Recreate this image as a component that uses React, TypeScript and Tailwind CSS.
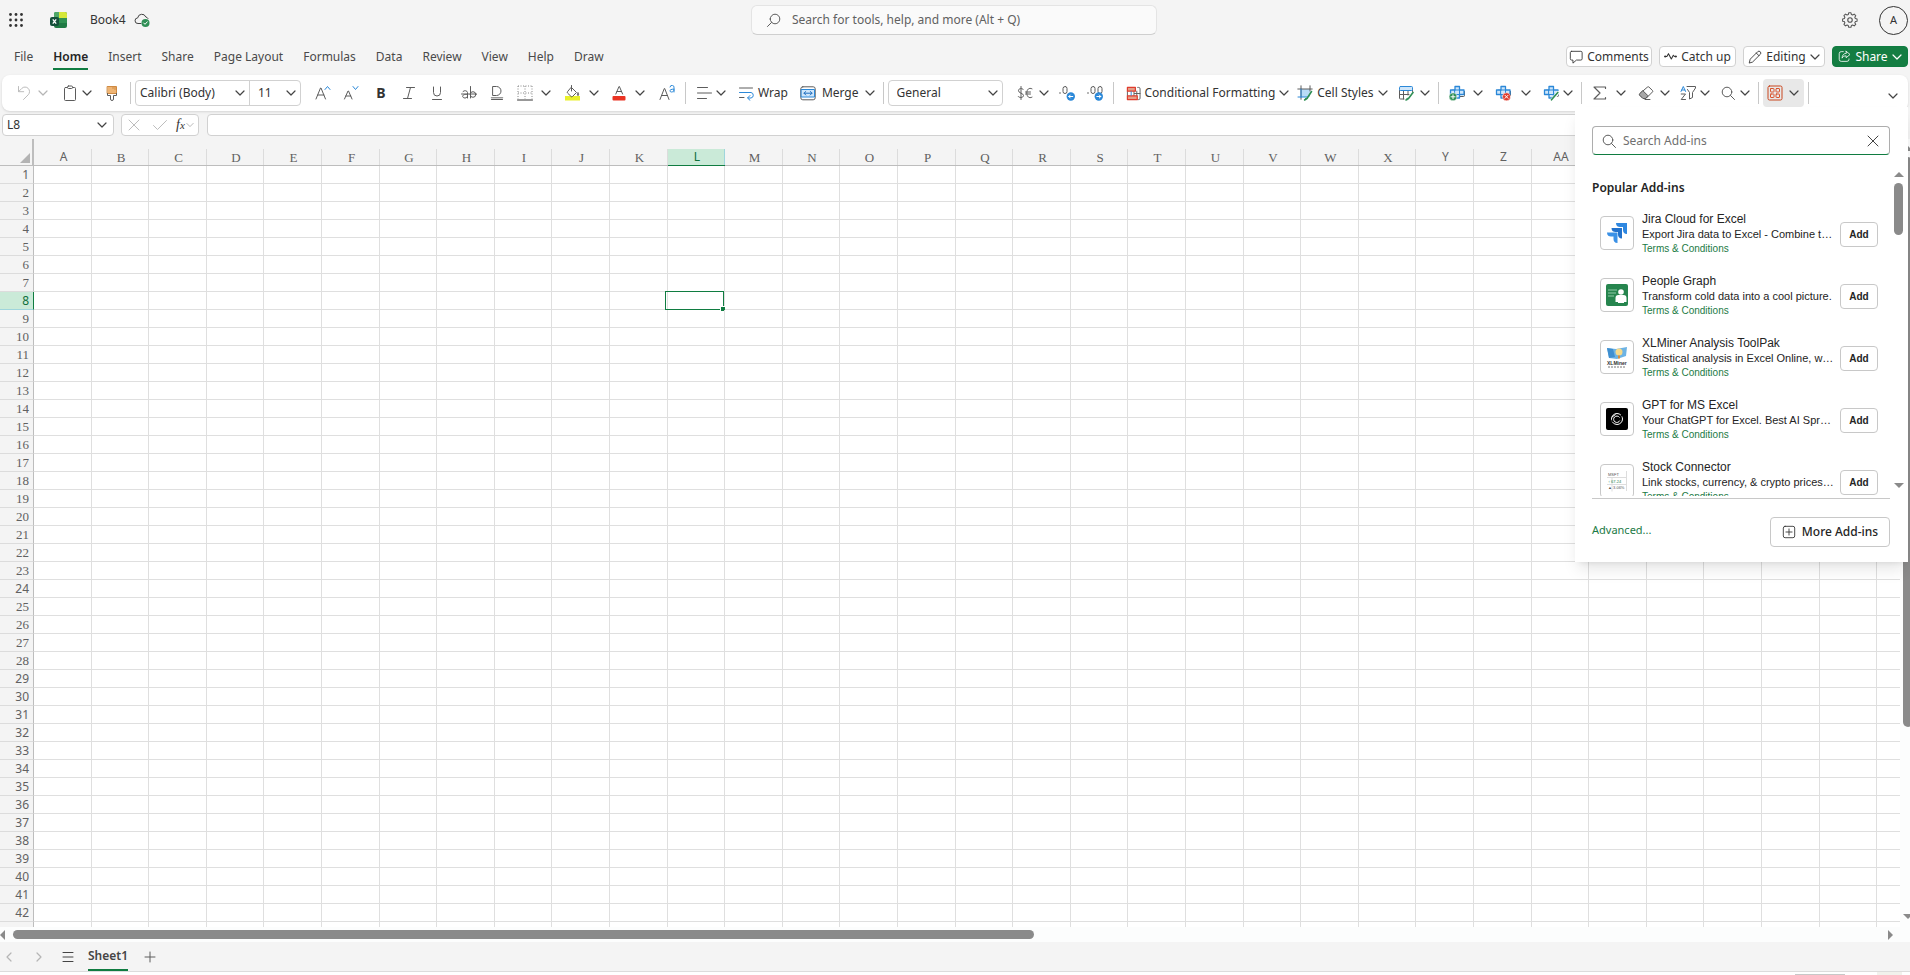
import type { ReactNode } from "react";
import clsx from "clsx";

const tabs = ["File", "Home", "Insert", "Share", "Page Layout", "Formulas", "Data", "Review", "View", "Help", "Draw"];

// the last column and row only show as a sliver, so they carry no label
const columns = [..."ABCDEFGHIJKLMNOPQRSTUVWXYZ", "AA", "AB", "AC", "AD", "AE", "AF", ""];
const rows = [...Array.from({ length: 42 }, (_, i) => i + 1), null];
const columnWidths = ["w-[58px]", "w-[57px]", "w-[58px]", "w-[57px]", "w-[58px]"];
const sansColumns = ["A", "L", "Y", "Z"];
const sansRows = [1, 8, 24];

const ACTIVE_COLUMN = "L";
const ACTIVE_ROW = 8;

const sans = "font-['Noto_Sans',sans-serif]";
const serif = "font-['Liberation_Serif',serif]";

/* ---------- icons ---------- */

function Icon({ children, size = 16, className }: { children: ReactNode; size?: number; className?: string }) {
    return (
        <svg
            width={size}
            height={size}
            viewBox="0 0 16 16"
            fill="none"
            stroke="#5c5c5c"
            strokeLinecap="round"
            strokeLinejoin="round"
            className={clsx("shrink-0", className)}
            aria-hidden="true"
        >
            {children}
        </svg>
    );
}

function Chevron({ className = "text-[#444]" }: { className?: string }) {
    return (
        <svg width="10" height="10" viewBox="0 0 10 10" fill="none" className={clsx("shrink-0", className)} aria-hidden="true">
            <path d="M1 3l4 4 4-4" stroke="currentColor" strokeWidth="1.2" strokeLinecap="round" strokeLinejoin="round" />
        </svg>
    );
}

function WaffleIcon() {
    return (
        <Icon>
            {[2.5, 8, 13.5].map((y) =>
                [2.5, 8, 13.5].map((x) => <circle key={`${x}-${y}`} cx={x} cy={y} r="1.4" fill="#333" stroke="none" />)
            )}
        </Icon>
    );
}

function ExcelIcon() {
    return (
        <svg width="18" height="18" viewBox="0 0 18 18" aria-hidden="true">
            <rect x="4" y="1" width="13" height="16" rx="2" fill="#1f7a44" />
            <path d="M6 1h4v6H4V3a2 2 0 012-2z" fill="#4fa868" />
            <path d="M9 1h6a2 2 0 012 2v4H9z" fill="#d5e83a" />
            <path d="M9 7h8v5H9z" fill="#2f9152" />
            <path d="M4 7h5v5H4z" fill="#1d8a49" />
            <rect x="0" y="6" width="9" height="9" rx="2" fill="#14503a" />
            <path d="M2.8 8.3l3.4 4.4M6.2 8.3l-3.4 4.4" stroke="#fff" strokeWidth="1.3" />
        </svg>
    );
}

function CloudSavedIcon() {
    return (
        <Icon>
            <path d="M7 11.5H4a2.8 2.8 0 01-.3-5.6A4.2 4.2 0 0111.8 5a3 3 0 012.2 1.5" stroke="#444" />
            <circle cx="11.5" cy="11" r="4" fill="#2f8f55" stroke="none" />
            <path d="M9.7 11l1.3 1.3 2.3-2.5" stroke="#fff" />
        </Icon>
    );
}

function SearchIcon({ flipped = false }: { flipped?: boolean }) {
    return (
        <Icon className={flipped ? "-scale-x-100" : ""}>
            <circle cx="7" cy="7" r="4.8" />
            <path d="M10.5 10.5L14.500 14.500" />
        </Icon>
    );
}

function GearIcon() {
    return (
        <Icon size={18}>
            <circle cx="8" cy="8" r="2" stroke="#555" />
            <path
                d="M6.900 1.500h2.200l.4 1.700 1.200.5 1.500-.9 1.500 1.500-.9 1.500.5 1.200 1.700.4v2.200l-1.700.4-.5 1.200.9 1.500-1.500 1.500-1.500-.9-1.200.5-.4 1.700H6.900l-.4-1.700-1.200-.5-1.500.9-1.500-1.500.9-1.500-.5-1.200L1 9.600V7.400L2.700 7l.5-1.200-.9-1.500 1.500-1.500 1.500.9 1.200-.5z"
                transform="translate(.5 .2) scale(.92)"
                stroke="#555"
            />
        </Icon>
    );
}

function UndoIcon() {
    return (
        <Icon>
            <path d="M2.5 1.500v5.200h5.200M2.500 6.700l3.300-3.300a4.500 4.500 0 016.400 6.400L7.500 14.500" stroke="#bdbdbd" />
        </Icon>
    );
}

function ClipboardIcon() {
    return (
        <Icon>
            <rect x="2.5" y="2.5" width="11" height="13" rx="1" />
            <rect x="5.5" y="1" width="5" height="2.5" rx="1" fill="#fff" />
        </Icon>
    );
}

function BrushIcon() {
    return (
        <Icon>
            <path d="M3.5 1.500h9v7h-9z" fill="#efb574" stroke="#cf8a42" />
            <path d="M9 1.500v2M11 1.500v3" stroke="#cf8a42" />
            <path d="M3.500 8.500v2h3v3.500a1.500 1.500 0 003 0v-3.500h3v-2" />
        </Icon>
    );
}

function GlyphIcon({ kind }: { kind: "grow" | "shrink" | "italic" | "underline" | "double" | "strike" | "color" | "case" }) {
    return (
        <Icon>
            {kind === "grow" && (
                <>
                    <path d="M1 14L5.500 3h.5l4.500 11M2.700 10h6.200" />
                    <path d="M10 4.500L12.500 1.500 15 4.500" stroke="#2b88d8" />
                </>
            )}
            {kind === "shrink" && (
                <>
                    <path d="M1.500 14L5 6h.5L9 14M2.800 11h5" />
                    <path d="M10 1.500L12.500 4.500 15 1.500" stroke="#2b88d8" />
                </>
            )}
            {kind === "italic" && <path d="M5.500 2.500h8M2.500 13.500h8M9.500 2.500l-3 11" />}
            {kind === "underline" && <path d="M4.500 2v5.500a3.500 3.500 0 007 0V2M3.500 14.500h9" />}
            {kind === "double" && (
                <>
                    <path d="M4 1.500h3.500a4.500 4.500 0 010 9H4zM2.500 14.500h11" />
                    <path d="M2.500 12.800h11" strokeWidth="1.5" stroke="#999" />
                </>
            )}
            {kind === "strike" && (
                <>
                    <path d="M2 6.500a2.500 2 0 014.500 1V13M6.500 9.500c-6-1-6 3.500-2.500 3.500 1.500 0 2.500-1 2.500-2" />
                    <path d="M9.500 1.500V13" />
                    <circle cx="12" cy="9.500" r="2.800" />
                    <path d="M.5 9h15" />
                </>
            )}
            {kind === "color" && (
                <>
                    <path d="M4.800 9L8 1.500h.4L11.600 9M6 6.500h4.500" />
                    <rect x="1.500" y="11" width="13" height="4.500" rx="1" fill="#ea3323" stroke="none" />
                </>
            )}
            {kind === "case" && (
                <>
                    <path d="M1 14.500L5.300 3.500h.4L10 14.500M2.500 10.500h6" />
                    <path d="M11 2a2 2 0 014 .8V7M15 4.200c-5-.5-5 2.800-2.500 2.800 1.500 0 2.500-1 2.500-1.800" stroke="#2b88d8" />
                </>
            )}
        </Icon>
    );
}

function BorderIcon() {
    return (
        <Icon>
            <path d="M1 1h14M1 8h14M1 1v13M8 1v13M15 1v13" strokeDasharray="1 1.5" stroke="#888" strokeLinecap="butt" />
            <path d="M.5 15h15" stroke="#333" />
        </Icon>
    );
}

function BucketIcon() {
    return (
        <Icon>
            <rect x="0" y="11" width="15" height="4.5" fill="#e9f02c" stroke="none" />
            <path d="M6.500 2.500l5 5-4 4a1 1 0 01-1.400 0L2.500 8a1 1 0 010-1.400zM6.500.5V6" />
            <path d="M13 8c-2.500 3.500 2.500 3.500 0 0z" />
        </Icon>
    );
}

function AlignIcon() {
    return (
        <Icon>
            <path d="M1.500 2.500h10M1.500 8h14M1.500 13.500h9" />
        </Icon>
    );
}

function WrapIcon() {
    return (
        <Icon>
            <path d="M1.500 3h13" />
            <path d="M1.500 7.500h11.500a2.800 2.800 0 010 5.500h-3M12 10.500L9.500 13l2.500 2.300" stroke="#2b88d8" />
            <path d="M1.500 12.500H6" />
        </Icon>
    );
}

function MergeIcon() {
    return (
        <Icon>
            <rect x=".8" y="1.8" width="14.4" height="13" rx="2" />
            <rect x="1.5" y="4.5" width="13" height="7.5" fill="#cfe6fa" stroke="#2b88d8" />
            <path d="M4 8.200h8M5.800 6.500L4 8.200l1.800 1.800M10.200 6.500L12 8.200l-1.800 1.800" stroke="#1f6fbf" />
        </Icon>
    );
}

function CurrencyIcon() {
    return (
        <Icon>
            <path d="M6.300 4.500C5.500 3 1.500 3 1.500 5.700S6.500 8 6.500 10.500 2 13 1.200 11.500M4 1.500v13" />
            <path d="M15 3.800c-3-1.600-5.200.7-5.200 4.200s2.200 5.800 5.200 4.200M8.500 7h5M8.500 9h5" />
        </Icon>
    );
}

function DecimalIcon({ zeros, arrow }: { zeros: number; arrow: string }) {
    return (
        <Icon>
            <circle cx="1" cy="8" r=".8" fill="#5c5c5c" stroke="none" />
            <rect x="4" y="1.5" width="4" height="7" rx="2" />
            {zeros > 1 && <rect x="11" y="1.5" width="4" height="7" rx="2" />}
            <circle cx="11.8" cy="11.5" r="4.2" fill="#2b88d8" stroke="none" />
            <path d={arrow} stroke="#fff" />
        </Icon>
    );
}

function ConditionalIcon() {
    return (
        <Icon size={15}>
            <path d="M12.500 1.500h1a1.500 1.500 0 011.500 1.500v10a1.500 1.500 0 01-1.500 1.500h-1M1.500 5.500v5M8.500 5.500v5M11.500 5.500v5M9 8h6" />
            <path d="M1.500 1.500H10v4H1.500zM1.500 10.500H12v4H1.500z" fill="#e3a08a" stroke="#e03c2d" strokeWidth="1.3" />
            <path d="M5.500 6v4" stroke="#2b88d8" />
        </Icon>
    );
}

function CellStylesIcon() {
    return (
        <Icon>
            <path d="M4 4h9v8H4z" fill="#b9dcf7" stroke="none" />
            <path d="M4 .8v13.500M.8 4h14.400M13 .8V6" />
            <path d="M1 12h9M4 4v8" stroke="#2b88d8" />
            <path d="M14.500 6.500L10 13.500" stroke="#2f8f55" strokeWidth="1.6" />
            <path d="M7.500 15c.2-1.500 1.200-2 2.500-1.500-.2 1-1 1.800-2.500 1.500z" fill="#2f8f55" stroke="#2f8f55" />
        </Icon>
    );
}

function FormatTableIcon() {
    return (
        <Icon>
            <path d="M1.500 5v8a1 1 0 001 1H6M5.500 5v9M10 5v5M1.500 9.500H11M14.500 4.500v2" />
            <rect x="1.5" y="1.5" width="13" height="4" rx="1" fill="#cfe6fa" stroke="#2b88d8" />
            <path d="M15 7.500l-4.500 6" stroke="#2f8f55" strokeWidth="1.6" />
            <path d="M8 15c.2-1.500 1.200-2 2.500-1.500-.2 1-1 1.800-2.500 1.500z" fill="#2f8f55" stroke="#2f8f55" />
        </Icon>
    );
}

function CellsIcon({ kind }: { kind: "insert" | "delete" | "format" }) {
    return (
        <Icon>
            <path d="M11 11.500h3.500a1 1 0 001-1v-4M4 6V5" />
            <path d="M6 1.500h4.500V5H15v4.500h-4.500V13H6V9.500H1.500V5H6z" fill="#cfe6fa" stroke="#2b88d8" strokeWidth="1.3" />
            <path d="M6 5h4.500v4.500H6z" stroke="#2b88d8" />
            {kind === "insert" && (
                <>
                    <circle cx="4" cy="11.8" r="3.9" fill="#2f8f55" stroke="#fff" strokeWidth=".5" />
                    <path d="M4 9.800v4M2 11.800h4" stroke="#fff" />
                </>
            )}
            {kind === "delete" && (
                <>
                    <circle cx="11.5" cy="11.8" r="4" fill="#e03c2d" stroke="#fff" strokeWidth=".5" />
                    <path d="M10 10.300l3 3M13 10.300l-3 3" stroke="#fff" />
                </>
            )}
            {kind === "format" && (
                <>
                    <path d="M9 15L15 7.500" stroke="#fff" strokeWidth="3.5" />
                    <path d="M8.500 14.800L14.800 7.500" stroke="#2f8f55" strokeWidth="1.7" />
                </>
            )}
        </Icon>
    );
}

function SigmaIcon() {
    return (
        <Icon>
            <path d="M13.500 3.500v-1.500H2L8 8l-6 6h11.500v-1.500" strokeWidth="1.2" />
        </Icon>
    );
}

function EraserIcon() {
    return (
        <Icon>
            <path d="M9.500 2a1 1 0 011.400 0L14.500 5.500a1 1 0 010 1.400L8 13.500H5L1.700 10.200a1 1 0 010-1.400z" />
            <path d="M5 5.800l5 5-2.500 2.700H5L1.700 10.200a1 1 0 010-1.400z" fill="#a8a8a8" />
            <path d="M7 14.500h5" />
        </Icon>
    );
}

function SortFilterIcon() {
    return (
        <Icon>
            <path d="M1 6.500L3.300 1.500 5.600 6.500M1.800 5h3" stroke="#2b88d8" />
            <path d="M1.200 9h4.300L1.200 14.500h4.300" />
            <path d="M7 1.500h8.500v1.500l-3 4.500v5l-3 1.500V7.500L7.500 4.500" />
        </Icon>
    );
}

function AddinsIcon() {
    return (
        <Icon>
            <rect x="1" y="1" width="14" height="14" rx="1.5" stroke="#c8461f" />
            {[3.5, 9].map((y) =>
                [3.5, 9].map((x) => (
                    <rect key={`${x}-${y}`} x={x} y={y} width="3.5" height="3.5" rx=".5" stroke="#d9532c" />
                ))
            )}
        </Icon>
    );
}

/* ---------- title bar and tabs ---------- */

function TitleBar() {
    return (
        <header className="grid h-10 grid-cols-[1fr_406px_1fr] items-center pr-0.5">
            <div className="flex items-center pl-2">
                <button type="button" aria-label="App launcher">
                    <WaffleIcon />
                </button>
                <span className="ml-6.5 mr-5.5">
                    <ExcelIcon />
                </span>
                <button type="button" className="text-xs text-[#333]">
                    Book4
                </button>
                <span className="ml-2">
                    <CloudSavedIcon />
                </span>
            </div>
            <label className="flex h-[30px] items-center gap-2.5 rounded-md border border-[#e4e4e4] border-b-[#cfcfcf] bg-[#fafafa] pl-3.5">
                <SearchIcon flipped />
                <input
                    type="text"
                    aria-label="Search"
                    placeholder="Search for tools, help, and more (Alt + Q)"
                    className="w-full bg-transparent text-xs outline-none placeholder:text-[#616161]"
                />
            </label>
            <div className="flex items-center justify-end gap-5">
                <button type="button" aria-label="Settings">
                    <GearIcon />
                </button>
                <button type="button" className="size-[29px] rounded-full border border-[#333] text-[11px] text-[#333]">
                    A
                </button>
            </div>
        </header>
    );
}

function HeaderButton({ children, primary = false, className }: { children: ReactNode; primary?: boolean; className: string }) {
    return (
        <button
            type="button"
            className={clsx(
                "flex h-[21px] items-center justify-center gap-1 rounded border text-xs",
                primary ? "border-[#107c41] bg-[#147d42] text-white" : "border-[#d1d1d1] bg-white text-[#333]",
                className
            )}
        >
            {children}
        </button>
    );
}

function TabBar() {
    return (
        <div className="flex h-[35px] items-center justify-between pb-0.5 pl-3.5 pr-0.5">
            <nav className="flex gap-5 text-xs text-[#4a4a4a]">
                {tabs.map((tab) => (
                    <button
                        key={tab}
                        type="button"
                        className={clsx(
                            "mt-0.5 h-6 border-b-2 leading-5",
                            tab === "Home" ? "border-[#107c41] font-semibold text-[#242424]" : "border-transparent"
                        )}
                    >
                        {tab}
                    </button>
                ))}
            </nav>
            <div className="flex gap-[7px]">
                <HeaderButton className="w-[86px]">
                    <Icon size={14}>
                        <path d="M3 1.500h10.500a1.500 1.500 0 011.500 1.500v7a1.500 1.500 0 01-1.500 1.500H8.500L4.500 15v-3.500H3A1.500 1.500 0 011.500 10V3A1.500 1.500 0 013 1.500z" stroke="#333" />
                    </Icon>
                    Comments
                </HeaderButton>
                <HeaderButton className="w-[77px]">
                    <Icon size={13}>
                        <path d="M1 8h2.500l2-3.500L9 11l2.500-4.500L13 8h2" stroke="#333" strokeWidth="1.3" />
                        <circle cx="1.5" cy="8" r="1.3" fill="#333" stroke="none" />
                        <circle cx="14.5" cy="8" r="1.3" fill="#333" stroke="none" />
                    </Icon>
                    Catch up
                </HeaderButton>
                <HeaderButton className="w-[82px]">
                    <Icon size={14}>
                        <path d="M1.500 14.500l1-4L11 2a2.100 2.100 0 013 3l-8.500 8.500zM9.500 3.500l3 3" stroke="#333" />
                    </Icon>
                    Editing
                    <Chevron />
                </HeaderButton>
                <HeaderButton primary className="w-[76px]">
                    <Icon size={13}>
                        <path
                            d="M6.500 2H4a2.500 2.500 0 00-2.500 2.500v7A2.500 2.500 0 004 14h7a2.500 2.500 0 002.500-2.500V11M10 1.500L14.800 5.500 10 9.500V7.200C7.500 7.200 6 8 5 10c.2-3.500 2-5.800 5-6z"
                            stroke="#fff"
                        />
                    </Icon>
                    Share
                    <Chevron className="text-white" />
                </HeaderButton>
            </div>
        </div>
    );
}

/* ---------- ribbon ---------- */

interface ToolProps {
    name: string;
    icon: ReactNode;
    label?: string;
    menu?: boolean;
    dim?: boolean;
    className: string;
}

function Tool({ name, icon, label, menu, dim, className }: ToolProps) {
    return (
        <button type="button" aria-label={name} className={clsx("flex shrink-0 items-center whitespace-nowrap", className)}>
            {icon}
            {label && <span>{label}</span>}
            {menu && <Chevron className={dim ? "text-[#b5b5b5]" : "text-[#444]"} />}
        </button>
    );
}

function Divider({ className }: { className: string }) {
    return <div className={clsx("h-[22px] w-px shrink-0 bg-[#c8c8c8]", className)} />;
}

function Combo({ name, value, className }: { name: string; value: string; className: string }) {
    return (
        <div className={clsx("relative h-full", className)}>
            <select aria-label={name} className="size-full appearance-none bg-transparent outline-none">
                <option>{value}</option>
            </select>
            <span className="pointer-events-none absolute inset-y-0 right-1 flex items-center">
                <Chevron />
            </span>
        </div>
    );
}

function Ribbon() {
    return (
        <div className="mx-0.5 flex h-9 items-center rounded-lg bg-white text-xs text-[#333] shadow">
            <Tool name="Undo" icon={<UndoIcon />} menu dim className="ml-3.5 gap-1.5" />
            <Tool name="Paste" icon={<ClipboardIcon />} menu className="ml-3.5 gap-1" />
            <Tool name="Format painter" icon={<BrushIcon />} className="ml-3" />
            <Divider className="ml-2.5" />
            <div className="ml-1 flex h-[26px] w-[166px] shrink-0 rounded border border-[#d1d1d1]">
                <Combo name="Font" value="Calibri (Body)" className="w-[114px] border-r border-[#d1d1d1] pl-1" />
                <Combo name="Font size" value="11" className="flex-1 pl-2" />
            </div>
            <Tool name="Grow font" icon={<GlyphIcon kind="grow" />} className="ml-3.5" />
            <Tool name="Shrink font" icon={<GlyphIcon kind="shrink" />} className="ml-3" />
            <button type="button" className="ml-3.5 w-4 shrink-0 text-sm font-bold">
                B
            </button>
            <Tool name="Italic" icon={<GlyphIcon kind="italic" />} className="ml-3" />
            <Tool name="Underline" icon={<GlyphIcon kind="underline" />} className="ml-3" />
            <Tool name="Strikethrough" icon={<GlyphIcon kind="strike" />} className="ml-4" />
            <Tool name="Double underline" icon={<GlyphIcon kind="double" />} className="ml-3" />
            <Tool name="Borders" icon={<BorderIcon />} menu className="ml-3 gap-2" />
            <Tool name="Fill color" icon={<BucketIcon />} menu className="ml-3.5 gap-2" />
            <Tool name="Font color" icon={<GlyphIcon kind="color" />} menu className="ml-3 gap-2" />
            <Tool name="Text effects" icon={<GlyphIcon kind="case" />} className="ml-3.5" />
            <Divider className="ml-2.5" />
            <Tool name="Align" icon={<AlignIcon />} menu className="ml-2.5 gap-1" />
            <Tool name="Wrap" icon={<WrapIcon />} label="Wrap" className="ml-3 gap-1" />
            <Tool name="Merge" icon={<MergeIcon />} label="Merge" menu className="ml-3 gap-1.5" />
            <Divider className="ml-2" />
            <div className="ml-1 h-[26px] w-[115px] shrink-0 rounded border border-[#d1d1d1]">
                <Combo name="Number format" value="General" className="pl-2" />
            </div>
            <Tool name="Currency" icon={<CurrencyIcon />} menu className="ml-3.5 gap-1.5" />
            <Tool name="Increase decimal" icon={<DecimalIcon zeros={1} arrow="M9.8 11.500h4M11.300 10L9.800 11.500l1.500 1.500" />} className="ml-2.5" />
            <Tool name="Decrease decimal" icon={<DecimalIcon zeros={2} arrow="M9.8 11.500h4M12.300 10l1.500 1.500-1.500 1.500" />} className="ml-3" />
            <Divider className="ml-2.5" />
            <Tool name="Conditional Formatting" icon={<ConditionalIcon />} label="Conditional Formatting" menu className="ml-3 gap-1" />
            <Tool name="Cell Styles" icon={<CellStylesIcon />} label="Cell Styles" menu className="ml-2 gap-1" />
            <Tool name="Format as table" icon={<FormatTableIcon />} menu className="ml-2.5 gap-1.5" />
            <Divider className="ml-2" />
            <Tool name="Insert cells" icon={<CellsIcon kind="insert" />} menu className="ml-2.5 gap-2" />
            <Tool name="Delete cells" icon={<CellsIcon kind="delete" />} menu className="ml-3 gap-2.5" />
            <Tool name="Format cells" icon={<CellsIcon kind="format" />} menu className="ml-3 gap-1" />
            <Divider className="ml-2" />
            <Tool name="AutoSum" icon={<SigmaIcon />} menu className="ml-2.5 gap-2" />
            <Tool name="Clear" icon={<EraserIcon />} menu className="ml-3 gap-1.5" />
            <Tool name="Sort and filter" icon={<SortFilterIcon />} menu className="ml-2.5 gap-1" />
            <Tool name="Find" icon={<SearchIcon />} menu className="ml-2.5 gap-1" />
            <Divider className="ml-2" />
            <Tool name="Add-ins" icon={<AddinsIcon />} menu className="ml-1 h-7 w-[41px] justify-center gap-1.5 rounded bg-[#e8e8e8]" />
            <Divider className="ml-1" />
            <button type="button" aria-label="Ribbon options" className="ml-auto mr-2.5 mt-1.5">
                <Chevron />
            </button>
        </div>
    );
}

function FormulaBar() {
    return (
        <div className="mt-[3px] flex h-[22px] px-0.5 text-xs text-[#333]">
            <div className="flex w-[112px] items-center rounded border border-[#d1d1d1] bg-white pl-1 pr-1.5">
                <input aria-label="Name box" defaultValue="L8" className="w-full min-w-0 bg-transparent outline-none" />
                <button type="button" aria-label="Named ranges">
                    <Chevron />
                </button>
            </div>
            <div className="ml-[7px] flex w-[78px] items-center rounded border border-[#d1d1d1] bg-white px-1">
                <button type="button" aria-label="Cancel">
                    <Icon>
                        <path d="M3 3l10 10M13 3L3 13" stroke="#bdbdbd" />
                    </Icon>
                </button>
                <button type="button" aria-label="Enter" className="ml-2.5">
                    <Icon>
                        <path d="M1.500 8.500L5.500 12.500 14.500 3.500" stroke="#bdbdbd" />
                    </Icon>
                </button>
                <button type="button" aria-label="Insert function" className="ml-2 flex items-center">
                    <span className="font-['Liberation_Serif',serif] text-sm italic leading-4">
                        f<span className="text-[11px]">x</span>
                    </span>
                </button>
                <Chevron className="ml-auto size-2 text-[#b5b5b5]" />
            </div>
            <input aria-label="Formula" className="ml-2 flex-1 rounded border border-[#d1d1d1] bg-white px-2 outline-none" />
        </div>
    );
}

/* ---------- grid ---------- */

function Grid() {
    return (
        <div className="min-w-0 flex-1 overflow-hidden bg-white">
            <table className="w-max border-separate border-spacing-0 text-xs text-[#616161]">
                <colgroup>
                    <col className="w-[34px]" />
                    {columns.map((column, i) => (
                        <col key={column} className={columnWidths[i % 5]} />
                    ))}
                </colgroup>
                <thead>
                    <tr className="h-[27px] bg-[#f4f4f4]">
                        <th aria-label="Select all" className="border-b border-r-2 border-[#bdbdbd] p-0 pr-0.5 align-bottom">
                            <svg width="10" height="10" viewBox="0 0 10 10" className="mb-0.5 ml-auto block" aria-hidden="true">
                                <path d="M10 0v10H0z" fill="#b3b3b3" />
                            </svg>
                        </th>
                        {columns.map((column) => {
                            const active = column === ACTIVE_COLUMN;
                            const isSans = sansColumns.includes(column) || column.length > 1;
                            return (
                                <th
                                    key={column}
                                    scope="col"
                                    className={clsx(
                                        "border-b p-0 align-bottom font-normal",
                                        active ? "border-[#107c41]" : "border-[#bdbdbd]"
                                    )}
                                >
                                    <div
                                        className={clsx(
                                            "h-4 border-r pl-0.5",
                                            active
                                                ? "border-[#9fd5dc] bg-[#caead8] text-[#0f703b]"
                                                : "border-[#dcdcdc]",
                                            isSans ? clsx(sans, "leading-[15px]") : clsx(serif, "text-[13px] leading-[18px]")
                                        )}
                                    >
                                        {column}
                                    </div>
                                </th>
                            );
                        })}
                    </tr>
                </thead>
                <tbody>
                    {rows.map((row) => {
                        const active = row === ACTIVE_ROW;
                        const isSans = row !== null && (sansRows.includes(row) || row > 28);
                        return (
                            <tr key={row ?? "last"} className="h-[18px]">
                                <th
                                    scope="row"
                                    className={clsx(
                                        "border-b border-r p-0 pr-1 text-right font-normal",
                                        active
                                            ? "border-b-[#9fd5dc] border-r-[#107c41] bg-[#caead8] text-[#0f703b]"
                                            : "border-b-[#dcdcdc] border-r-[#bdbdbd] bg-[#f4f4f4]",
                                        isSans ? clsx(sans, "leading-[17px]") : clsx(serif, "text-[13px] leading-[17px]")
                                    )}
                                >
                                    {row}
                                </th>
                                {columns.map((column) => (
                                    <td key={column} className="relative border-b border-r border-[#dfdfdf] p-0">
                                        {active && column === ACTIVE_COLUMN && (
                                            <div className="absolute -bottom-px -left-[3px] -top-px right-0 border border-[#107c41]">
                                                <div className="absolute -bottom-[3px] -right-[3px] size-[6px] border border-white bg-[#107c41]" />
                                            </div>
                                        )}
                                    </td>
                                ))}
                            </tr>
                        );
                    })}
                </tbody>
            </table>
        </div>
    );
}

function Arrow({ d, className }: { d: string; className?: string }) {
    return (
        <svg width="10" height="10" viewBox="0 0 10 10" className={clsx("shrink-0", className)} aria-hidden="true">
            <path d={d} fill="#8a8a8a" />
        </svg>
    );
}

const UP = "M0 8l5-5 5 5z";
const DOWN = "M0 3l5 5 5-5z";

function VerticalScrollbar() {
    return (
        <div className="flex w-2.5 shrink-0 flex-col overflow-hidden bg-[#fcfdfd] pb-1.5 pl-[3px] pt-1">
            <Arrow d={UP} />
            <div className="my-1 flex-1">
                <div className="h-[76%] w-2.5 rounded-full bg-[#8a8a8a]" />
            </div>
            <Arrow d={DOWN} />
        </div>
    );
}

function HorizontalScrollbar() {
    return (
        <div className="flex h-[15px] shrink-0 items-center bg-[#fcfdfd] pr-4">
            <Arrow d="M5 0v10L0 5z" />
            <div className="ml-[3px] flex-1">
                <div className="h-[9px] w-6/11 rounded-full bg-[#8a8a8a]" />
            </div>
            <Arrow d="M4 0v10l5-5z" />
        </div>
    );
}

function SheetBar() {
    return (
        <footer className="shrink-0">
            <div className="flex h-[30px] items-center border-b border-[#dcdcdc] bg-[#f4f4f4] pl-1">
                <button type="button" aria-label="Previous sheet">
                    <Chevron className="rotate-90 text-[#b5b5b5]" />
                </button>
                <button type="button" aria-label="Next sheet" className="ml-5">
                    <Chevron className="-rotate-90 text-[#b5b5b5]" />
                </button>
                <button type="button" aria-label="All sheets" className="ml-4">
                    <Icon>
                        <path d="M3 3.500h10M3 8h10M3 12.500h10" stroke="#444" />
                    </Icon>
                </button>
                <button type="button" className="ml-3 h-full border-b-2 border-[#107c41] text-xs font-semibold text-[#444]">
                    Sheet1
                </button>
                <button type="button" aria-label="New sheet" className="ml-3.5">
                    <Icon>
                        <path d="M8 3v10M3 8h10" />
                    </Icon>
                </button>
            </div>
            <div className="flex h-[3px] items-end justify-end gap-8 bg-white pr-2">
                <div className="h-px w-[50px] bg-[#c8c8c8]" />
                <div className="h-full w-[25px] bg-[#f1f1ec]" />
            </div>
        </footer>
    );
}

/* ---------- add-ins panel ---------- */

const addins = [
    {
        name: "Jira Cloud for Excel",
        text: "Export Jira data to Excel - Combine t…",
        logo: (
            <svg width="22" height="22" viewBox="0 0 22 22" aria-hidden="true">
                <path d="M10 1h11v11c-3 0-4-2-4-4V5h-3c-2 0-4-1-4-4z" fill="#2e87e0" />
                <path d="M5.500 6h10.500v10.500c-3 0-4-2-4-4V10H9.500c-2 0-4-1-4-4z" fill="#2272cc" />
                <path d="M1 10.500h10.500V21c-3 0-4-2-4-4v-2.500H5c-2 0-4-1-4-4z" fill="#3b91e6" />
            </svg>
        ),
    },
    {
        name: "People Graph",
        text: "Transform cold data into a cool picture.",
        logo: (
            <svg width="22" height="22" viewBox="0 0 22 22" aria-hidden="true">
                <rect width="22" height="22" rx="2" fill="#26854e" />
                <path d="M2 6h9M2 9h8M2 12h6" stroke="#8fcaa7" />
                <circle cx="15" cy="8" r="2.8" fill="#fff" />
                <path d="M9.500 18v-4a3 3 0 013-3h5a3 3 0 013 3v4h-2.500v-4 5h-6v-5 4z" fill="#fff" />
            </svg>
        ),
    },
    {
        name: "XLMiner Analysis ToolPak",
        text: "Statistical analysis in Excel Online, w…",
        logo: (
            <svg width="22" height="22" viewBox="0 0 22 22" aria-hidden="true">
                <path d="M1 2l9 1 11-2-1 9-9 3-8-1z" fill="#6db3e4" />
                <path d="M1 2l6 1 2 8-6 1z" fill="#3f8fd0" />
                <circle cx="13" cy="6" r="3.5" fill="#f6d98a" />
                <path d="M12 9.500h2v3h-2z" fill="#d98d3a" />
                <text x="1" y="19" fontSize="5" fontWeight="bold" fill="#333" fontFamily="Liberation Sans">
                    XLMiner
                </text>
                <path d="M2 21h18" stroke="#777" strokeDasharray="2 1" />
            </svg>
        ),
    },
    {
        name: "GPT for MS Excel",
        text: "Your ChatGPT for Excel. Best AI Spr…",
        logo: (
            <svg width="22" height="22" viewBox="0 0 22 22" fill="none" stroke="#fff" aria-hidden="true">
                <rect width="22" height="22" rx="2" fill="#000" stroke="none" />
                <circle cx="11" cy="11" r="5.5" strokeDasharray="14 1.5" />
                <path d="M13.500 9.500a3.200 3.200 0 10.300 3M6 9l3.500-2.500" />
            </svg>
        ),
    },
    {
        name: "Stock Connector",
        text: "Link stocks, currency, & crypto prices…",
        logo: (
            <svg width="22" height="22" viewBox="0 0 22 22" fontFamily="Liberation Sans" fontSize="4" fill="#555" aria-hidden="true">
                <path d="M1 7.500h20M1 14.500h20M6 7.500v14M20.500 1v20" stroke="#ddd" />
                <text x="2" y="6">MSFT</text>
                <text x="2" y="13" fill="#26854e">↑ 67.24</text>
                <text x="2" y="19">▲ 3.06%</text>
            </svg>
        ),
    },
];

function AddinsPanel() {
    return (
        <section
            aria-label="Add-ins"
            className="absolute right-0.5 top-[107px] w-[333px] bg-white pb-[15px] pl-[17px] pr-[18px] pt-[19px] text-[#242424] shadow-lg"
        >
            <label className="flex h-[29px] items-center gap-1 rounded border border-[#adadad] border-b-[#107c41] px-2">
                <SearchIcon />
                <input
                    type="text"
                    aria-label="Search add-ins"
                    placeholder="Search Add-ins"
                    className="min-w-0 flex-1 bg-transparent pl-0.5 text-xs outline-none placeholder:text-[#707070]"
                />
                <button type="button" aria-label="Clear search">
                    <Icon>
                        <path d="M3 3l10 10M13 3L3 13" stroke="#444" />
                    </Icon>
                </button>
            </label>

            <div className="-mr-3.5 mt-3.5 flex h-[327px]">
                <div className="min-w-0 flex-1 overflow-hidden">
                    <h2 className="mb-3 pt-[9px] text-xs font-semibold leading-5">Popular Add-ins</h2>
                    <ul className="font-['Liberation_Sans',Arial,sans-serif]">
                        {addins.map((addin) => (
                            <li key={addin.name} className="flex h-[62px] items-start pl-2">
                                <div className="mt-1.5 flex size-[34px] shrink-0 items-center justify-center rounded border border-[#c8c8c8]">
                                    {addin.logo}
                                </div>
                                <div className="ml-2 w-[194px] shrink-0 pt-px">
                                    <h3 className="text-xs leading-4">{addin.name}</h3>
                                    <p className="whitespace-nowrap text-[11px] leading-[14px]">{addin.text}</p>
                                    <a href="#terms" className="block text-[10px] leading-4 text-[#1b7a45]">
                                        Terms &amp; Conditions
                                    </a>
                                </div>
                                <button
                                    type="button"
                                    className="ml-1 mt-3 h-[25px] w-[38px] shrink-0 rounded border border-[#c8c8c8] text-[10px] font-bold"
                                >
                                    Add
                                </button>
                            </li>
                        ))}
                    </ul>
                </div>
                <div className="flex w-2.5 shrink-0 flex-col">
                    <Arrow d={UP} />
                    <div className="mt-1 flex-1">
                        <div className="h-[52px] w-[9px] rounded-full bg-[#8a8a8a]" />
                    </div>
                    <Arrow d={DOWN} className="mb-1.5" />
                </div>
            </div>

            <div className="mt-0.5 flex items-center justify-between border-t border-[#c8c8c8] pt-[18px]">
                <a href="#advanced" className="pb-1 text-[11px] text-[#1b7a45]">
                    Advanced...
                </a>
                <button
                    type="button"
                    className="flex h-[30px] w-[120px] items-center justify-center gap-1.5 rounded border border-[#c8c8c8] text-xs font-medium"
                >
                    <Icon size={14}>
                        <rect x="1.5" y="1.5" width="13" height="13" rx="2" stroke="#333" />
                        <path d="M8 4.500v7M4.500 8h7" stroke="#333" />
                    </Icon>
                    More Add-ins
                </button>
            </div>
        </section>
    );
}

export default function App() {
    return (
        <div className={clsx("relative flex h-screen flex-col overflow-hidden bg-[#f4f4f4]", sans)}>
            <TitleBar />
            <TabBar />
            <Ribbon />
            <FormulaBar />
            <main className="mt-[3px] flex min-h-0 flex-1">
                <Grid />
                <VerticalScrollbar />
            </main>
            <HorizontalScrollbar />
            <SheetBar />
            <AddinsPanel />
        </div>
    );
}
